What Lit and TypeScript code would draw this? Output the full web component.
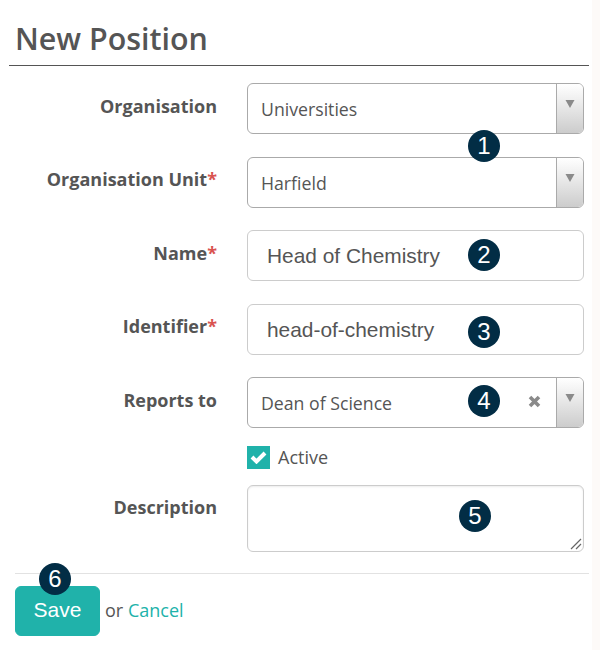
import { LitElement, html, css } from "lit";
import { customElement } from "lit/decorators.js";

const badge = (n: number, cls: string) => html`<span class="badge ${cls}">${n}</span>`;
const arrow = html`<span class="arrow"><svg width="10" height="8" viewBox="0 0 10 8"><path d="M0.5 0H9.5L5 8Z" fill="#8a8a8a"/></svg></span>`;

@customElement("app-root")
export class AppRoot extends LitElement {
  static styles = css`
    :host { display: block; width: 600px; height: 650px; background: #fdfaf8; font-family: "Open Sans", sans-serif; color: #555; overflow: hidden; }
    .page { position: relative; width: 592px; height: 650px; background: #fff; box-sizing: border-box; padding: 16px 3px 0 9px; }
    h1 { margin: 0; padding: 0 0 0 6px; height: 49px; font-size: 30.4px; line-height: 46px; font-weight: 600; color: #555; border-bottom: 1px solid #555; box-sizing: content-box; }
    form { display: flex; flex-direction: column; padding-top: 17px; }
    .row { display: grid; grid-template-columns: 208px 337px; column-gap: 30px; align-items: start; }
    .row.select { height: 51px; margin-bottom: 23px; }
    .row.select.before-text { margin-bottom: 22px; }
    .row.text { height: 51px; margin-bottom: 23px; }
    .row.tight { margin-bottom: 22px; }
    .row.last { margin-bottom: 18px; }
    label { text-align: right; font-size: 18px; font-weight: 700; line-height: 24px; padding-top: 11px; color: #555; }
    .tight label, .before-text label, .area label { padding-top: 10px; }
    label i { font-style: normal; color: #d9534f; }
    .ctl { box-sizing: border-box; height: 100%; border: 1px solid #aaa; border-radius: 6px; background: #fff; display: flex; align-items: center; font-size: 17.7px; color: #555; }
    .ctl .val { flex: 1; padding: 1px 0 0 13px; }
    .arrow { align-self: stretch; width: 27px; border-left: 1px solid #aaa; border-radius: 0 5px 5px 0; background: linear-gradient(#fff 0%, #e6e6e6 50%, #ccc 100%); display: flex; justify-content: center; padding-top: 16px; box-sizing: border-box; }
    .clear { margin-right: 15px; margin-top: -2px; display: flex; }
    .input { border-color: #ccc; padding: 0 0 0 19px; font-family: "Liberation Sans", Arial, sans-serif; font-size: 20.9px; }
    .check { display: flex; align-items: center; gap: 8px; margin: 0 0 17px 238px; font-size: 18px; height: 22px; }
    .box { width: 23px; height: 23px; background: #20b2aa; display: flex; align-items: center; justify-content: center; }
    .row.area { height: 67px; }
    .area-ctl { position: relative; border-color: #ccc; box-shadow: inset 0 1px 2px rgba(0,0,0,.08); }
    .grip { position: absolute; right: 1px; bottom: 1px; display: flex; }
    .actions { margin: 21px 0 0 6px; border-top: 1px solid #e2e2e2; padding-top: 12px; display: flex; align-items: center; gap: 5px; font-size: 18px; }
    .actions span { margin-top: -2px; }
    button { width: 85px; height: 50px; background: #20b2aa; border: 1px solid #20b2aa; border-radius: 6px; color: #fff; font: 21px "Liberation Sans", Arial, sans-serif; padding: 0 0 2px; }
    a { color: #20b2aa; text-decoration: none; }
    .badge { position: absolute; width: 32px; height: 32px; border-radius: 50%; background: #022d45; color: #fff; font: 24px/32px "Liberation Sans", Arial, sans-serif; text-align: center; }
    .b1 { left: 468px; top: 130px; }
    .b2 { left: 468px; top: 239px; }
    .b3 { left: 468px; top: 316px; }
    .b4 { left: 468px; top: 385px; }
    .b5 { left: 459px; top: 500px; }
    .b6 { left: 39px; top: 563px; }
  `;

  render() {
    return html`<div class="page">
      <h1>New Position</h1>
      <form>
        <div class="row select"><label>Organisation</label><div class="ctl"><span class="val">Universities</span>${arrow}</div></div>
        <div class="row select before-text"><label>Organisation Unit<i>*</i></label><div class="ctl"><span class="val">Harfield</span>${arrow}</div></div>
        <div class="row text"><label>Name<i>*</i></label><div class="ctl input">Head of Chemistry</div></div>
        <div class="row text tight"><label>Identifier<i>*</i></label><div class="ctl input">head-of-chemistry</div></div>
        <div class="row select last"><label>Reports to</label><div class="ctl"><span class="val">Dean of Science</span>
          <span class="clear"><svg width="13" height="13" viewBox="0 0 13 13"><path d="M2 2L11 11M11 2L2 11" stroke="#8a8a8a" stroke-width="3.6"/></svg></span>${arrow}</div></div>
        <div class="check"><span class="box"><svg width="17" height="14" viewBox="0 0 17 14"><path d="M2 7L6.5 11.5L15 3" fill="none" stroke="#fff" stroke-width="4"/></svg></span>Active</div>
        <div class="row area"><label>Description</label><div class="ctl area-ctl"><span class="grip"><svg width="12" height="12" viewBox="0 0 12 12"><path d="M1 11L11 1M6 11L11 6" stroke="#666" stroke-width="1.2"/></svg></span></div></div>
        <div class="actions"><button type="button">Save</button><span>or <a href="#">Cancel</a></span></div>
      </form>
      ${badge(1, "b1")}${badge(2, "b2")}${badge(3, "b3")}${badge(4, "b4")}${badge(5, "b5")}${badge(6, "b6")}
    </div>`;
  }
}
